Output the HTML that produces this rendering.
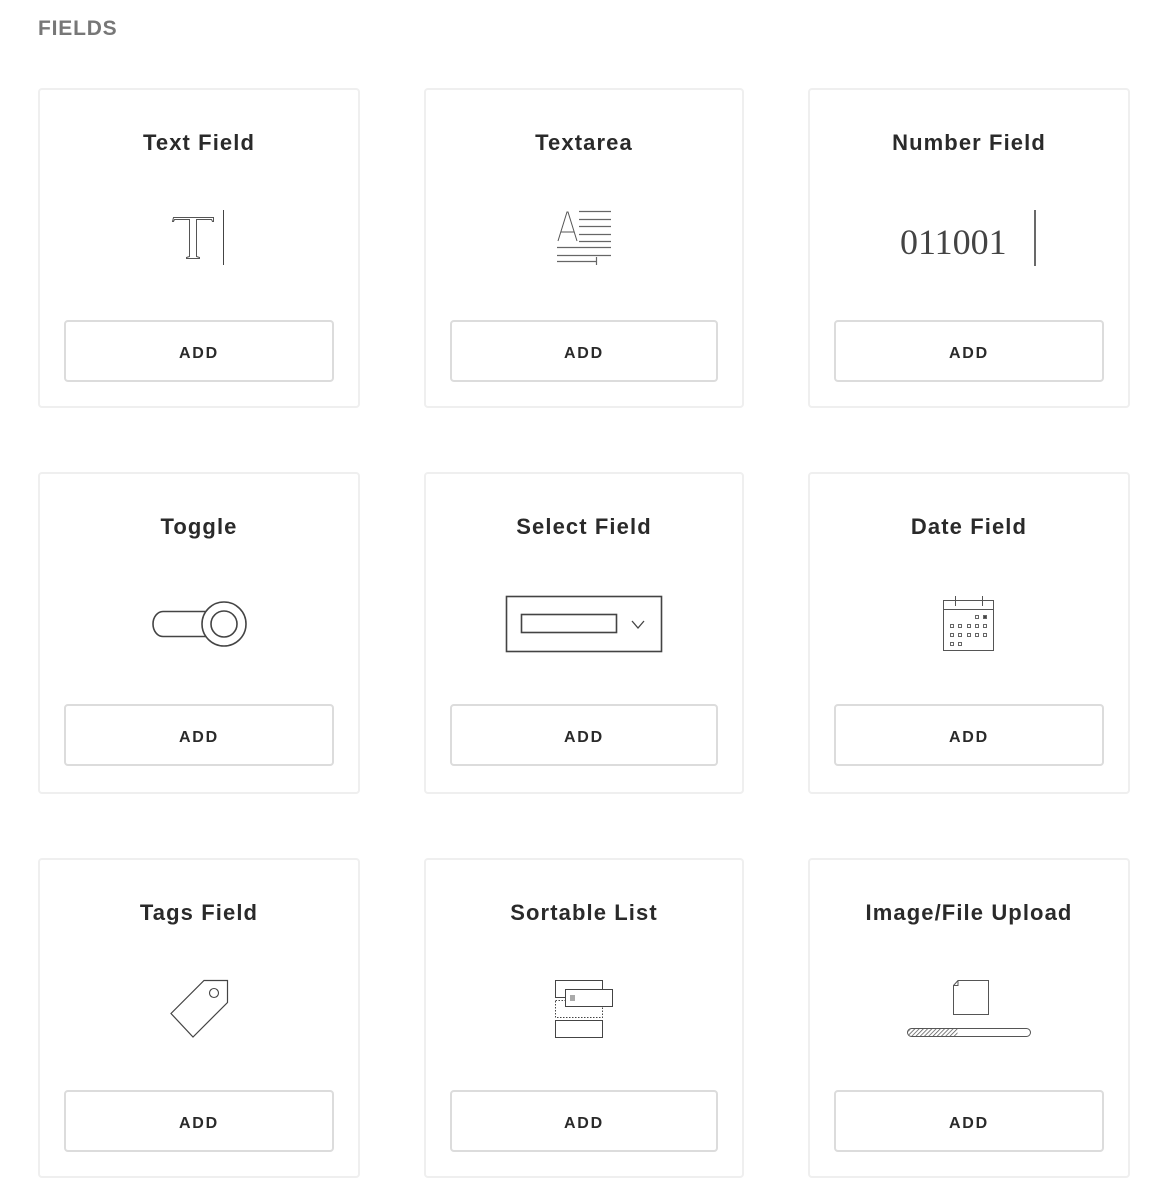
<!DOCTYPE html>
<html><head><meta charset="utf-8"><style>
body{margin:0;background:#fff;width:1166px;height:1202px;position:relative;overflow:hidden;font-family:"Liberation Sans",sans-serif}
.h{position:absolute;left:38px;top:17px;font-size:21px;color:#777;font-weight:600;letter-spacing:.8px}
.c{position:absolute;border:2px solid #efefef;border-radius:4px;box-sizing:border-box}
.t{position:absolute;left:0;right:0;top:40px;text-align:center;font-size:22px;font-weight:600;color:#2a2a2a;letter-spacing:1.1px}
.b{position:absolute;left:24px;right:24px;top:230px;height:62px;border:2px solid #dcdcdc;border-radius:4px;box-sizing:border-box;text-align:center;line-height:64px;font-size:16px;font-weight:600;letter-spacing:1.8px;color:#2a2a2a}
svg{position:absolute;left:0;top:0}
</style></head><body>
<div class="h">FIELDS</div>
<div class="c" style="left:38px;top:88px;width:322px;height:320px"><div class="t">Text Field</div><div class="b">ADD</div></div>
<div class="c" style="left:424px;top:88px;width:320px;height:320px"><div class="t">Textarea</div><div class="b">ADD</div></div>
<div class="c" style="left:808px;top:88px;width:322px;height:320px"><div class="t">Number Field</div><div class="b">ADD</div></div>
<div class="c" style="left:38px;top:472px;width:322px;height:322px"><div class="t">Toggle</div><div class="b">ADD</div></div>
<div class="c" style="left:424px;top:472px;width:320px;height:322px"><div class="t">Select Field</div><div class="b">ADD</div></div>
<div class="c" style="left:808px;top:472px;width:322px;height:322px"><div class="t">Date Field</div><div class="b">ADD</div></div>
<div class="c" style="left:38px;top:858px;width:322px;height:320px"><div class="t">Tags Field</div><div class="b">ADD</div></div>
<div class="c" style="left:424px;top:858px;width:320px;height:320px"><div class="t">Sortable List</div><div class="b">ADD</div></div>
<div class="c" style="left:808px;top:858px;width:322px;height:320px"><div class="t">Image/File Upload</div><div class="b">ADD</div></div>
<svg width="1166" height="1202" fill="none" stroke="#444" stroke-width="1">
<defs><pattern id="hp" width="3" height="3" patternUnits="userSpaceOnUse" patternTransform="rotate(45)"><line x1="0" y1="0" x2="0" y2="3" stroke="#555" stroke-width="1.5"/></pattern></defs>
<path d="M173.5 217.5h40v4h-1l-1-2h-15v37l3 1v1h-13v-1l3-1v-37h-15l-1 2h-1z" stroke="#555"/>
<line x1="223.5" y1="210" x2="223.5" y2="265"/>
<path d="M558 241l9-29h1l9 29M561 232h13" stroke="#555"/>
<path d="M579 211.5h32M579 219.5h32M579 226.5h32M579 234.5h32M579 241.5h32M557 247.5h54M557 255.5h54M557 261.5h39M596.5 257v8" stroke="#666" stroke-width="1.2"/>
<text x="900" y="254" font-family="Liberation Serif" font-size="36" fill="#444" stroke="none">011001</text>
<line x1="1035" y1="210" x2="1035" y2="266" stroke-width="1.6"/>
<path d="M210 611.5h-47a10 12.5 0 0 0 0 25h47" stroke-width="1.6"/>
<circle cx="224" cy="624" r="22" stroke-width="1.6" fill="#fff"/>
<circle cx="224" cy="624" r="13" stroke-width="1.6"/>
<rect x="506.5" y="596.5" width="155" height="55" stroke-width="1.6"/>
<rect x="521.5" y="614.5" width="95" height="18" stroke-width="1.6"/>
<path d="M632 621l6 7 6-7" stroke-width="1.3"/>
<rect x="943.5" y="600.5" width="50" height="50" stroke="#555"/>
<path d="M943.5 609.5h50M955.5 596v10M982.5 596v10" stroke="#555"/>
<g stroke="#666" stroke-width="1"><rect x="975.5" y="615.5" width="3" height="3"/><rect x="983.5" y="615.5" width="3" height="3" fill="#444"/>
<rect x="950.5" y="624.5" width="3" height="3"/><rect x="958.5" y="624.5" width="3" height="3"/><rect x="967.5" y="624.5" width="3" height="3"/><rect x="975.5" y="624.5" width="3" height="3"/><rect x="983.5" y="624.5" width="3" height="3"/>
<rect x="950.5" y="633.5" width="3" height="3"/><rect x="958.5" y="633.5" width="3" height="3"/><rect x="967.5" y="633.5" width="3" height="3"/><rect x="975.5" y="633.5" width="3" height="3"/><rect x="983.5" y="633.5" width="3" height="3"/>
<rect x="950.5" y="642.5" width="3" height="3"/><rect x="958.5" y="642.5" width="3" height="3"/></g>
<path d="M204 980.5h23.5v22l-34.5 34.5-22-23.5z" stroke-width="1.2"/>
<circle cx="214" cy="993" r="4.5" stroke-width="1.1"/>
<rect x="555.5" y="980.5" width="47" height="17"/>
<rect x="555.5" y="1000.5" width="47" height="17" stroke-dasharray="1.5 1.5"/>
<rect x="555.5" y="1020.5" width="47" height="17"/>
<rect x="565.5" y="989.5" width="47" height="17" fill="#fff"/>
<rect x="570" y="995" width="5" height="6" fill="#aaa" stroke="none"/>
<path d="M958 980.5h30.5v34h-35v-29z M953.5 985.5h4.5v-5" stroke="#555"/>
<rect x="907.5" y="1028.5" width="123" height="8" rx="4" stroke="#555"/>
<path d="M911.5 1029h46v7h-46a3.5 3.5 0 0 1 0-7z" fill="url(#hp)" stroke="none"/>
</svg>
</body></html>
